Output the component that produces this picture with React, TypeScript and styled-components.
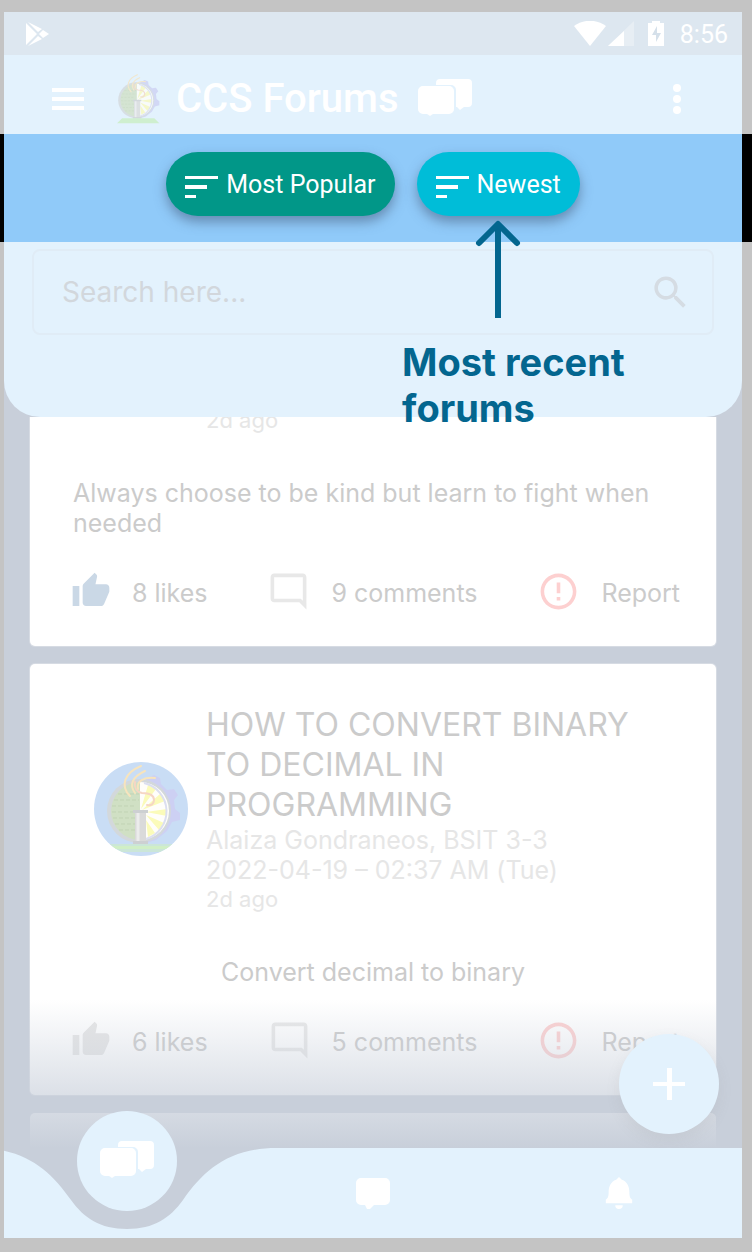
import React from 'react';
import styled, { createGlobalStyle } from 'styled-components';
import { MdOutlineErrorOutline, MdOutlineModeComment, MdSearch, MdThumbUp } from 'react-icons/md';

const sky = '#e3f2fd';
const slate = '#c8cfda';
const navy = '#03668f';

const GlobalStyle = createGlobalStyle`
  * { box-sizing: border-box; }
  body { margin: 0; background: #c4c4c4; font-family: Inter, sans-serif; }
  button, input { font: inherit; border: 0; margin: 0; padding: 0; background: none; }
  button { color: inherit; cursor: pointer; }
  svg { display: block; flex: none; }
`;

const Page = styled.div`
  padding: 12px 0 14px;
  background: #c4c4c4;
`;
const Phone = styled.div`
  margin: 0 10px 0 4px;
  display: flex;
  flex-direction: column;
  background: ${slate};
`;
const Header = styled.header`
  background: ${sky};
  border-radius: 0 0 36px 36px;
  position: relative;
  z-index: 2;
`;
const StatusBar = styled.div`
  height: 43px;
  padding: 2px 14px 0 20px;
  display: flex;
  align-items: center;
  background: #dde7f0;
  color: #fff;
  font: 25px/30px Roboto, sans-serif;
`;
const StatusIcons = styled.div`
  margin-left: auto;
  margin-right: 12px;
  display: flex;
  align-items: center;
`;
const AppBar = styled.div`
  height: 79px;
  padding: 8px 50px 0 44px;
  display: flex;
  align-items: center;
  color: #fff;
`;
const IconButton = styled.button<{ $w?: number }>`
  display: flex;
  align-items: center;
  justify-content: center;
  width: ${(p) => p.$w ?? 40}px;
  height: 48px;
`;
const AppTitle = styled.h1`
  margin: 0 19px 0 16px;
  font: 500 40px/48px Roboto, sans-serif;
`;
const Brand = styled.div`
  flex: 1;
  margin-left: 29px;
  display: flex;
  align-items: center;
`;
const FilterBand = styled.div`
  height: 108px;
  margin: 0 -10px 0 -4px;
  padding-top: 18px;
  border: solid #000;
  border-width: 0 10px 0 4px;
  display: flex;
  justify-content: center;
  align-items: flex-start;
  gap: 22px;
  background: #90caf9;
`;
const Anchor = styled.div`
  position: relative;
`;
const Chip = styled.button<{ $color: string }>`
  height: 64px;
  padding: 2px 19px 0;
  border-radius: 32px;
  display: flex;
  align-items: center;
  gap: 8px;
  background: ${(p) => p.$color};
  color: #fff;
  font: 25px/30px Roboto, sans-serif;
  box-shadow: 0 6px 12px rgba(60, 80, 110, 0.5);
  svg { margin-top: 4px; }
`;
const Callout = styled.div`
  position: absolute;
  top: calc(100% + 4px);
  left: calc(50% - 96px);
  width: 260px;
  color: ${navy};
  font-weight: 700;
  font-size: 38px;
  line-height: 46px;
  svg { margin: 0 0 21px 73px; }
  p { margin: 0; }
`;
const SearchArea = styled.form`
  padding: 7px 28px 82px;
`;
const SearchBox = styled.label`
  height: 86px;
  padding: 0 20px 0 28px;
  display: flex;
  align-items: center;
  border: 2px solid #e0ecf6;
  border-radius: 8px;
  color: #d5dce3;
`;
const SearchInput = styled.input`
  flex: 1;
  min-width: 0;
  font-size: 28px;
  line-height: 34px;
  outline: 0;
  &::placeholder { color: #d2d7dc; opacity: 1; }
`;
const Feed = styled.main`
  position: relative;
  padding: 0 26px;
  overflow: hidden;
  display: flex;
  flex-direction: column;
  gap: 18px;
`;
const Fade = styled.div`
  position: absolute;
  left: 0;
  right: 0;
  bottom: 0;
  height: 148px;
  background: linear-gradient(rgba(200, 207, 218, 0), ${slate});
  pointer-events: none;
`;
const Card = styled.article<{ $cut?: boolean }>`
  padding: ${(p) => (p.$cut ? '0 36px 36px 43px' : '41px 36px 36px 43px')};
  background: #fff;
  border-radius: ${(p) => (p.$cut ? '0 0 5px 5px' : '5px')};
  box-shadow: 0 0 0 1px rgba(255, 255, 255, 0.25);
  color: #cbcbcb;
`;
const NextCard = styled.article`
  height: 35px;
  border-radius: 5px 5px 0 0;
  background: #fff;
`;
const PostHead = styled.div<{ $cut?: boolean }>`
  display: flex;
  align-items: center;
  gap: 18px;
  padding-left: ${(p) => (p.$cut ? 133 : 21)}px;
  margin-top: ${(p) => (p.$cut ? -11 : 0)}px;
`;
const PostTitle = styled.h2`
  margin: 0;
  font-weight: 400;
  font-size: 32px;
  line-height: 40px;
`;
const Meta = styled.p`
  margin: 0;
  font-size: 25px;
  line-height: 30px;
  color: #e6e6e6;
`;
const Age = styled.p`
  margin: 0;
  font-size: 22px;
  line-height: 28px;
  color: #e6e6e6;
`;
const Body = styled.p<{ $center?: boolean }>`
  margin: 44px 0 36px;
  padding-right: 7px;
  font-size: 25px;
  line-height: 30px;
  text-align: ${(p) => (p.$center ? 'center' : 'left')};
`;
const Actions = styled.div`
  display: flex;
  justify-content: space-between;
`;
const Action = styled.button<{ $tint: string }>`
  height: 36px;
  padding-top: 2px;
  display: flex;
  align-items: center;
  gap: 24px;
  font-size: 25px;
  line-height: 30px;
  white-space: nowrap;
  svg { color: ${(p) => p.$tint}; margin: -4px -3px 0 -2px; }
`;
const Fab = styled.button`
  position: absolute;
  right: 23px;
  bottom: 14px;
  width: 100px;
  height: 100px;
  border-radius: 50%;
  background: ${sky};
  display: flex;
  align-items: center;
  justify-content: center;
  box-shadow: 0 6px 14px rgba(140, 140, 140, 0.12);
`;
const Nav = styled.nav`
  position: relative;
  height: 90px;
  display: grid;
  grid-template-columns: repeat(3, 1fr);
  background: linear-gradient(${sky}, ${sky}) 272px 0 no-repeat;
`;
const NavCurve = styled.svg`
  position: absolute;
  left: 0;
  top: 0;
`;
const NavItem = styled.button`
  display: flex;
  align-items: center;
  justify-content: center;
`;
const ActiveItem = styled.span`
  position: relative;
  width: 100px;
  height: 100px;
  margin-top: -64px;
  border-radius: 50%;
  background: ${sky};
  display: flex;
  align-items: center;
  justify-content: center;
`;

const ForumIcon = () => (
  <svg width="54" height="42" viewBox="0 0 54 42" fill="#fff">
    <path d="M22 1h28a4 4 0 0 1 4 4v20a4 4 0 0 1-4 4h-4l-4 3-3-3h-1V12a5 5 0 0 0-5-5H18V5a4 4 0 0 1 4-4z" />
    <path d="M5 8h26a5 5 0 0 1 5 5v18a5 5 0 0 1-5 5H15l-3 2-3-2H5a5 5 0 0 1-5-5V13a5 5 0 0 1 5-5z" />
  </svg>
);

const SortIcon = () => (
  <svg width="33" height="24" viewBox="0 0 33 24" fill="#fff">
    <path d="M0 1h33v3H0zM0 10h22v4H0zM0 20h11v3H0z" />
  </svg>
);

const Emblem = () => (
  <>
    <path d="M52 17l8-4 6 3 1 6 6 6 7-1 4 6-4 5 1 9 5 4v7l-8 2-5 9-11 9-10 3z" fill="#cdd0f3" />
    <circle cx="45" cy="49" r="32" fill="#d3d8db" />
    <path d="M46 20a29 29 0 0 0 0 58z" fill="#d0e0c4" />
    <g stroke="#c1d3b4" strokeWidth="1" strokeDasharray="4 2">
      <path d="M24 32h21M20 38h25M18 44h24M18 50h23M19 56h22M21 62h20M25 68h16" />
    </g>
    <path d="M46 20a29 29 0 0 1 0 58z" fill="#fffefa" />
    <path d="M47 47L54 23l8 4zM48 48l18-16 5 7zM52 50l21-3v7zM52 53l18 8-5 7zM52 58l9 13-7 4z" fill="#fbfbba" />
    <path d="M50 21a29 29 0 0 1 2 56" fill="none" stroke="#dcdff0" strokeWidth="2" />
    <path d="M41 50h11v30H41z" fill="#dadada" />
    <path d="M39 48h15v3H39zM39 79h15v3H39z" fill="#cdd0d2" />
    <path d="M44 51v28" stroke="#ececec" strokeWidth="3" />
    <g fill="none" strokeLinecap="round">
      <path d="M47 4C30 11 26 24 36 34M51 9C38 15 35 23 41 31M61 16C50 15 42 19 44 27" stroke="#f7e4bd" strokeWidth="2" />
      <path d="M41 20c-1 6 2 10 7 11 5 0 12 1 12 7 0 4-3 6-7 5" stroke="#f6d6c4" strokeWidth="2" />
    </g>
  </>
);

const BarLogo = () => (
  <svg width="43" height="53" viewBox="11 -1 76 94" opacity=".75">
    <Emblem />
    <path d="M20 81h57l9 9H11z" fill="#c9efc0" />
  </svg>
);

const Avatar = () => (
  <svg width="94" height="94" viewBox="0 0 94 94">
    <defs>
      <clipPath id="avatar-disc"><circle cx="47" cy="47" r="47" /></clipPath>
    </defs>
    <g clipPath="url(#avatar-disc)">
      <rect width="94" height="94" fill="#c9ddf5" />
      <Emblem />
      <rect y="82" width="94" height="8" fill="#cbe6d8" />
      <rect y="84" width="94" height="3" fill="#d0efc6" />
    </g>
  </svg>
);

interface ActionRowProps {
  likes: number;
  comments: number;
  liked?: boolean;
}

const ActionRow = ({ likes, comments, liked }: ActionRowProps) => (
  <Actions>
    <Action $tint={liked ? '#cad8e6' : '#e6e6e6'}><MdThumbUp size={40} />{likes} likes</Action>
    <Action $tint="#e8e8e8"><MdOutlineModeComment size={43} />{comments} comments</Action>
    <Action $tint="#fdd0d0"><MdOutlineErrorOutline size={43} />Report</Action>
  </Actions>
);

export default function App() {
  return (
    <Page>
      <GlobalStyle />
      <Phone>
        <Header>
          <StatusBar>
            <svg width="26" height="26" viewBox="0 0 26 26" fill="#fff">
              <path d="M2 1v22l11-11zM4 0l10 10 4-3zM4 24l10-10 4 3zM15 12l4-4 6 4-6 4z" />
            </svg>
            <StatusIcons>
              <svg width="94" height="28" viewBox="0 0 94 28" fill="#fff">
                <path d="M0 5C9-2 23-2 32 5L16 25z" />
                <path d="M34 25L60 0v25z" opacity=".3" />
                <path d="M34 25L50 10v15z" />
                <path d="M74 2h4V0h8v2h4v23H74z" />
                <path d="M83 5l-5 9h4v7l5-9h-4z" fill="#d5e0ea" />
              </svg>
            </StatusIcons>
            8:56
          </StatusBar>
          <AppBar>
            <IconButton aria-label="Menu">
              <svg width="32" height="24" viewBox="0 0 32 24" fill="#fff">
                <path d="M0 1h32v4H0zM0 10h32v4H0zM0 19h32v4H0z" />
              </svg>
            </IconButton>
            <Brand>
              <BarLogo />
              <AppTitle>CCS Forums</AppTitle>
              <ForumIcon />
            </Brand>
            <IconButton $w={30} aria-label="More options">
              <svg width="8" height="30" viewBox="0 0 8 30" fill="#fff">
                <circle cx="4" cy="4" r="4" /><circle cx="4" cy="15" r="4" /><circle cx="4" cy="26" r="4" />
              </svg>
            </IconButton>
          </AppBar>
          <FilterBand>
            <Chip $color="#019788"><SortIcon />Most Popular</Chip>
            <Anchor>
              <Chip $color="#00bdd8"><SortIcon />Newest</Chip>
              <Callout>
                <svg width="46" height="98" viewBox="0 0 46 98" fill="none" stroke={navy} strokeWidth="6">
                  <path d="M23 4v94" />
                  <path d="M4 23L23 4l19 19" strokeLinecap="round" strokeLinejoin="round" />
                </svg>
                <p>Most recent forums</p>
              </Callout>
            </Anchor>
          </FilterBand>
          <SearchArea>
            <SearchBox>
              <SearchInput type="text" aria-label="Search" placeholder="Search here..." />
              <MdSearch size={43} />
            </SearchBox>
          </SearchArea>
        </Header>
        <Feed>
          <Card $cut>
            <PostHead $cut><Age>2d ago</Age></PostHead>
            <Body>Always choose to be kind but learn to fight when needed</Body>
            <ActionRow likes={8} comments={9} liked />
          </Card>
          <Card>
            <PostHead>
              <Avatar />
              <div>
                <PostTitle>HOW TO CONVERT BINARY TO DECIMAL IN PROGRAMMING</PostTitle>
                <Meta>Alaiza Gondraneos, BSIT 3-3</Meta>
                <Meta>2022-04-19 – 02:37 AM (Tue)</Meta>
                <Age>2d ago</Age>
              </div>
            </PostHead>
            <Body $center>Convert decimal to binary</Body>
            <ActionRow likes={6} comments={5} />
          </Card>
          <NextCard />
          <Fade />
          <Fab aria-label="New forum">
            <svg width="32" height="32" viewBox="0 0 32 32" fill="#fff">
              <path d="M14 0h5v14h13v4H19v14h-5V18H0v-4h14z" />
            </svg>
          </Fab>
        </Feed>
        <Nav>
          <NavCurve width="273" height="90" viewBox="0 0 273 90" fill={sky}>
            <path d="M-27 0C21 0 46 22 67 52C80 70 96 81 123 81S166 70 179 52C200 22 225 0 273 0V90H-27z" />
          </NavCurve>
          <NavItem aria-label="Forums"><ActiveItem><ForumIcon /></ActiveItem></NavItem>
          <NavItem aria-label="Messages">
            <svg width="34" height="31" viewBox="0 0 34 31" fill="#fff">
              <path d="M5 0h24a5 5 0 0 1 5 5v17a5 5 0 0 1-5 5H18l-6 6-3-6H5a5 5 0 0 1-5-5V5a5 5 0 0 1 5-5z" overflow="visible" />
            </svg>
          </NavItem>
          <NavItem aria-label="Notifications">
            <svg width="30" height="32" viewBox="0 0 30 34" fill="#fff">
              <path d="M15 0l3 3c6 2 8 8 8 13 0 5 1 7 3 8v4H1v-4c2-1 3-3 3-8C4 11 6 5 12 3zM11 30h8a4 4 0 0 1-8 0z" />
            </svg>
          </NavItem>
        </Nav>
      </Phone>
    </Page>
  );
}
